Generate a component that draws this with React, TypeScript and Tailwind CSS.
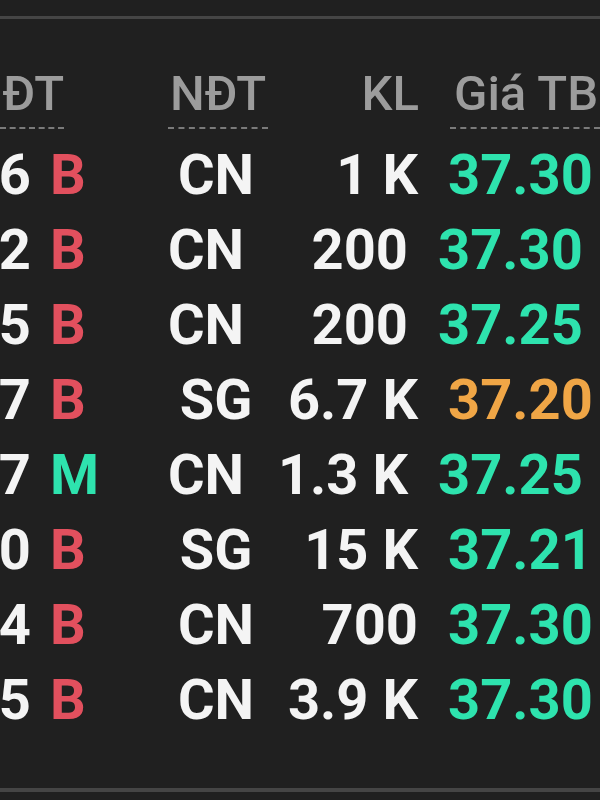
import React from "react";

type Row = {
  digit: string;
  side: "B" | "M";
  who: string;
  kl: string;
  price: string;
  color: "green" | "orange";
  shift: boolean;
};

const rows: Row[] = [
  { digit: "6", side: "B", who: "CN", kl: "1 K", price: "37.30", color: "green", shift: false },
  { digit: "2", side: "B", who: "CN", kl: "200", price: "37.30", color: "green", shift: true },
  { digit: "5", side: "B", who: "CN", kl: "200", price: "37.25", color: "green", shift: true },
  { digit: "7", side: "B", who: "SG", kl: "6.7 K", price: "37.20", color: "orange", shift: false },
  { digit: "7", side: "M", who: "CN", kl: "1.3 K", price: "37.25", color: "green", shift: true },
  { digit: "0", side: "B", who: "SG", kl: "15 K", price: "37.21", color: "green", shift: false },
  { digit: "4", side: "B", who: "CN", kl: "700", price: "37.30", color: "green", shift: false },
  { digit: "5", side: "B", who: "CN", kl: "3.9 K", price: "37.30", color: "green", shift: false },
];

export default function App() {
  return (
    <div
      className="w-[600px] h-[800px] bg-[#202020] overflow-hidden flex flex-col"
      style={{ fontFamily: "Roboto, 'Noto Sans', sans-serif" }}
    >
      <div className="h-[16px]" />
      <div className="h-[3px] bg-[#454545]" />
      {/* header */}
      <div className="flex items-end mt-[50px] h-[60px] text-[49px] leading-[49px] font-medium text-[#9c9c9c]">
        <div className="w-[64px] flex justify-end whitespace-nowrap pb-[9px] border-b-2 border-dashed border-[#7a7a7a]">
          ĐT
        </div>
        <div className="w-[104px]" />
        <div className="w-[100px] flex justify-center pb-[9px] border-b-2 border-dashed border-[#7a7a7a]">
          NĐT
        </div>
        <div className="w-[151px] flex justify-end pb-[9px] border-b-2 border-transparent">KL</div>
        <div className="w-[31px]" />
        <div className="flex-1 whitespace-nowrap pl-[4px] pb-[9px] border-b-2 border-dashed border-[#7a7a7a]">
          Giá TB
        </div>
      </div>
      {/* rows */}
      <div className="mt-[9px] flex flex-col text-[56px] leading-[75px] font-bold text-[#f4f4f4]">
        {rows.map((r, i) => (
          <div key={i} className="flex h-[75px] whitespace-nowrap">
            <div className="w-[31px] flex justify-end">{r.digit}</div>
            <div
              className={
                (r.shift ? "w-[109px] " : "w-[119px] ") +
                "pl-[19px] " +
                (r.side === "B" ? "text-[#e2505e]" : "text-[#2ee3ae]")
              }
            >
              {r.side}
            </div>
            <div className="w-[132px] flex justify-center">{r.who}</div>
            <div className="w-[136px] flex justify-end">{r.kl}</div>
            <div
              className={
                "pl-[30px] " + (r.color === "green" ? "text-[#2ee3ae]" : "text-[#f0a646]")
              }
            >
              {r.price}
            </div>
          </div>
        ))}
      </div>
      <div className="flex-1" />
      <div className="h-[4px] bg-[#454545] mb-[8px]" />
    </div>
  );
}
